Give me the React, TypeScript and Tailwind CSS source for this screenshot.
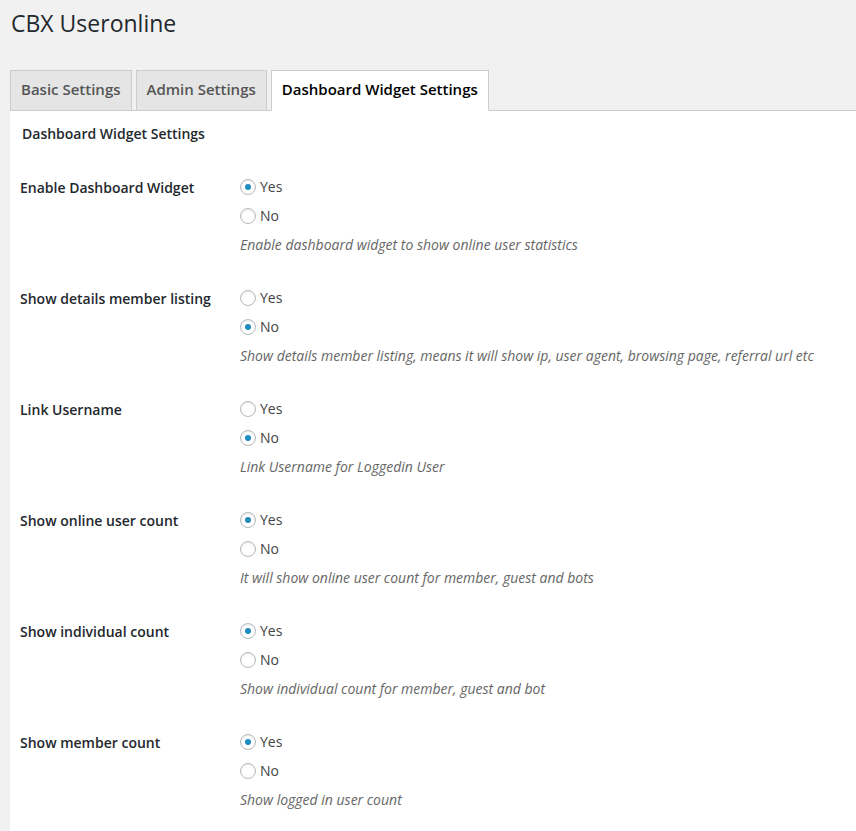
import { useState } from "react";

type Setting = {
  id: string;
  label: string;
  value: "yes" | "no";
  desc: string;
};

const initialSettings: Setting[] = [
  {
    id: "enable_widget",
    label: "Enable Dashboard Widget",
    value: "yes",
    desc: "Enable dashboard widget to show online user statistics",
  },
  {
    id: "details_listing",
    label: "Show details member listing",
    value: "no",
    desc: "Show details member listing, means it will show ip, user agent, browsing page, referral url etc",
  },
  {
    id: "link_username",
    label: "Link Username",
    value: "no",
    desc: "Link Username for Loggedin User",
  },
  {
    id: "online_count",
    label: "Show online user count",
    value: "yes",
    desc: "It will show online user count for member, guest and bots",
  },
  {
    id: "individual_count",
    label: "Show individual count",
    value: "yes",
    desc: "Show individual count for member, guest and bot",
  },
  {
    id: "member_count",
    label: "Show member count",
    value: "yes",
    desc: "Show logged in user count",
  },
];

const tabs = ["Basic Settings", "Admin Settings", "Dashboard Widget Settings"];

const Radio = ({
  checked,
  label,
  onClick,
}: {
  checked: boolean;
  label: string;
  onClick: () => void;
}) => (
  <label
    onClick={onClick}
    className="flex items-center h-[29px] cursor-pointer text-[14px] text-[#444]"
  >
    <span className="w-[16px] h-[16px] rounded-full border border-[#b4b9be] bg-white shadow-[inset_0_1px_2px_rgba(0,0,0,0.1)] flex items-center justify-center mr-[4px]">
      {checked && <span className="w-[6px] h-[6px] rounded-full bg-[#1e8cbe]" />}
    </span>
    <span>{label}</span>
  </label>
);

const App = () => {
  const [activeTab, setActiveTab] = useState(2);
  const [settings, setSettings] = useState(initialSettings);

  const setValue = (id: string, value: "yes" | "no") => {
    setSettings((prev) => prev.map((s) => (s.id === id ? { ...s, value } : s)));
  };

  return (
    <div
      className="min-h-screen bg-[#f1f1f1] pl-[10px] text-[14px]"
      style={{ fontFamily: '"Open Sans", "Liberation Sans", sans-serif' }}
    >
      {/* Title */}
      <h1 className="pt-[9px] pl-[1px] text-[23px] leading-[29px] font-normal text-[#23282d]">
        CBX Useronline
      </h1>

      {/* Tabs */}
      <div className="mt-[32px] flex items-end gap-[4px] border-b border-[#ccc]">
        {tabs.map((tab, i) => (
          <button
            key={tab}
            onClick={() => setActiveTab(i)}
            className={`h-[41px] -mb-px px-[10px] pb-[2px] border border-[#ccc] text-[15px] font-semibold flex items-center ${
              activeTab === i
                ? "bg-white text-black border-b-white"
                : "bg-[#e5e5e5] text-[#555]"
            }`}
          >
            {tab}
          </button>
        ))}
      </div>

      {/* Content */}
      <div className="bg-white pt-[13px] pb-[20px]">
        <h2 className="pl-[12px] h-[19px] leading-[19px] text-[14px] font-semibold text-[#23282d] mb-[17px]">
          Dashboard Widget Settings
        </h2>

        {settings.map((s) => (
          <div key={s.id} className="grid grid-cols-[230px_1fr] py-[12px]">
            <div className="pl-[10px] pt-[1px] h-[29px] flex items-center font-semibold text-[#23282d]">
              {s.label}
            </div>
            <div>
              <Radio
                checked={s.value === "yes"}
                label="Yes"
                onClick={() => setValue(s.id, "yes")}
              />
              <Radio
                checked={s.value === "no"}
                label="No"
                onClick={() => setValue(s.id, "no")}
              />
              <p className="h-[29px] leading-[29px] italic text-[#666]">{s.desc}</p>
            </div>
          </div>
        ))}
      </div>
    </div>
  );
};

export default App;
